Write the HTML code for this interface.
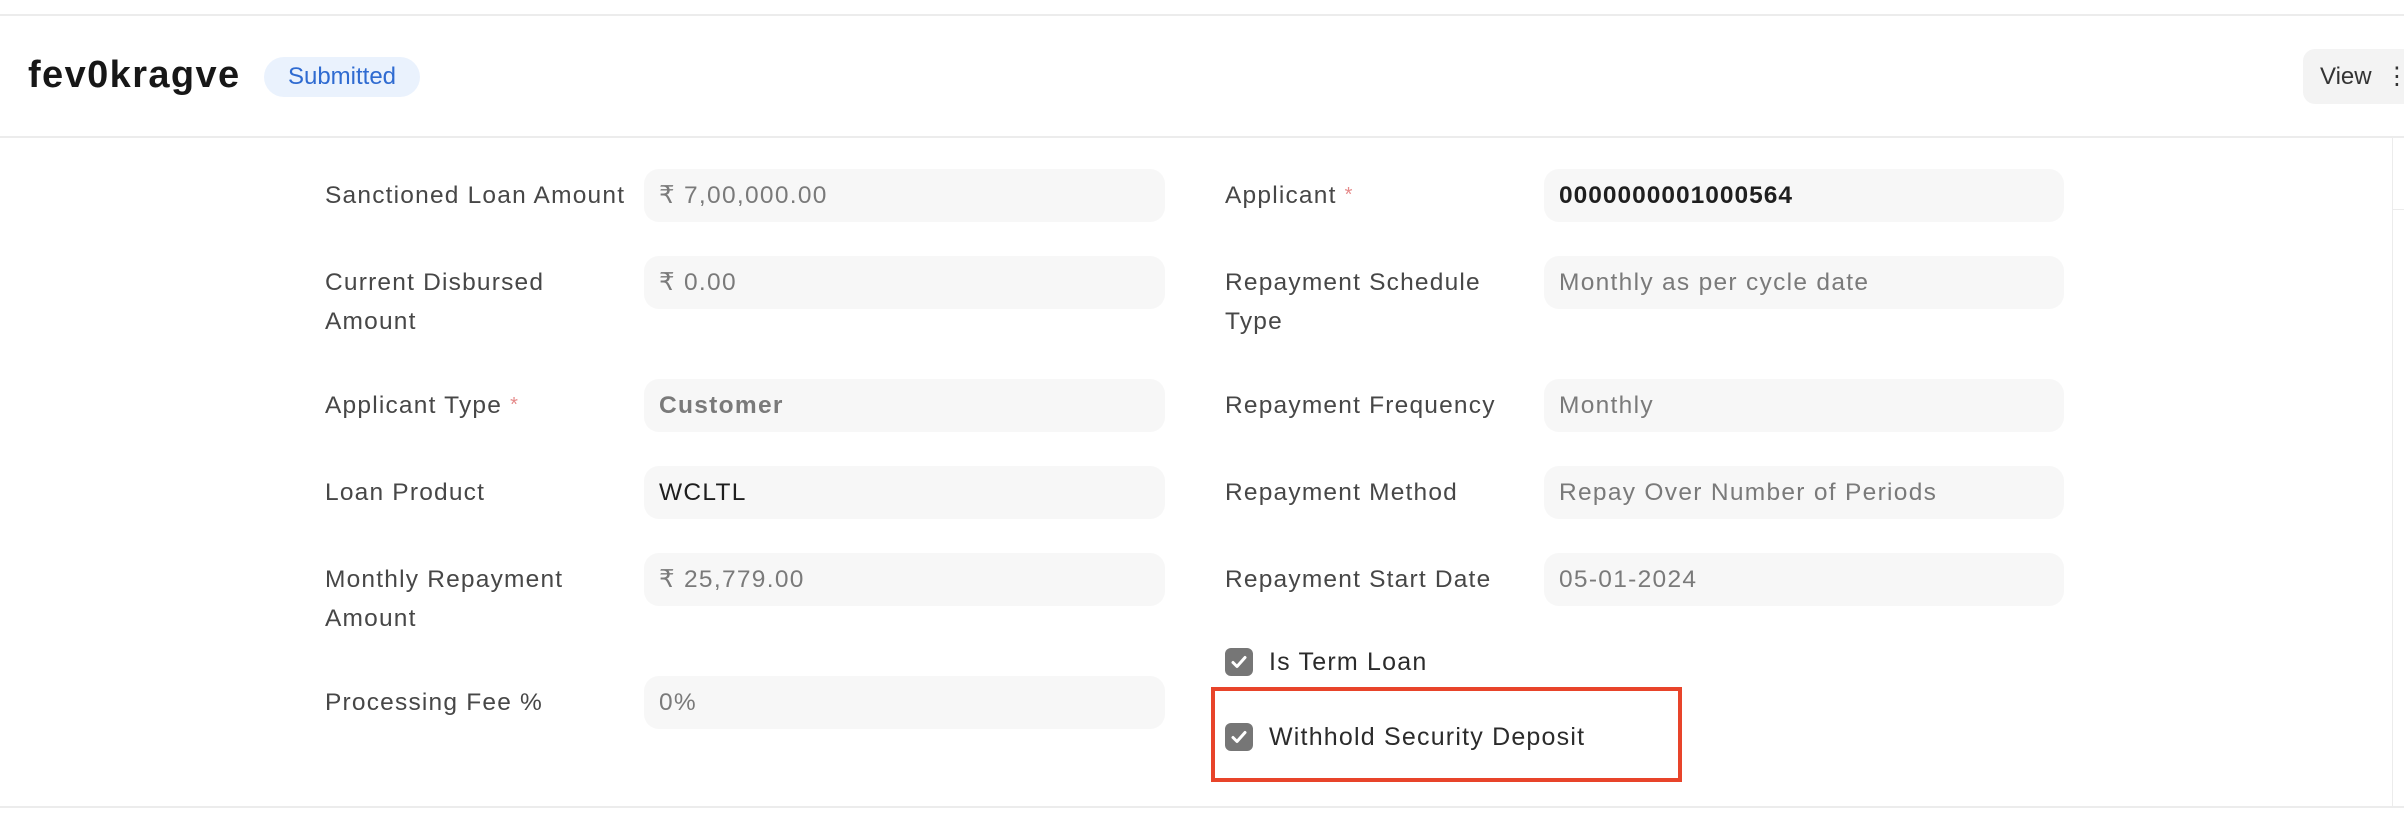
<!DOCTYPE html>
<html><head><style>
body{margin:0;width:2404px;height:828px;background:#fff;font-family:"Liberation Sans",sans-serif;position:relative;overflow:hidden}
.a{position:absolute}
.l{position:absolute;font-size:24.5px;letter-spacing:1.2px;color:#474747;line-height:39px}
.i{position:absolute;background:#f7f7f7;border-radius:15px;height:53px;font-size:24.5px;letter-spacing:1.3px;color:#7a7a7a;line-height:53px;padding-left:15px;box-sizing:border-box;white-space:nowrap}
.s{color:#e58a8a;font-size:20px;vertical-align:top}
.cb{position:absolute;width:28px;height:28px;border-radius:6px;background:#767676}
.ct{position:absolute;font-size:25px;letter-spacing:1.2px;color:#2b2b2b;line-height:30px}
</style></head><body>
<div class="a" style="left:0;top:14px;width:2404px;height:2px;background:#ececec"></div>
<div class="a" style="left:28px;top:54px;font-size:38px;letter-spacing:1.4px;font-weight:bold;color:#171717">fev0kragve</div>
<div class="a" style="left:264px;top:57px;width:156px;height:40px;border-radius:20px;background:#eaf2fd;color:#2f6bd1;font-size:24px;line-height:40px;text-align:center">Submitted</div>
<div class="a" style="left:2303px;top:49px;width:140px;height:55px;border-radius:12px;background:#f3f3f3;color:#333;font-size:24px;line-height:55px;padding-left:17px;box-sizing:border-box">View &nbsp;⋮</div>
<div class="a" style="left:0;top:136px;width:2404px;height:2px;background:#ececec"></div>
<div class="a" style="left:2392px;top:138px;width:1px;height:668px;background:#ececec"></div>
<div class="a" style="left:2392px;top:209px;width:12px;height:1px;background:#ececec"></div>

<div class="l" style="left:325px;top:176px">Sanctioned Loan Amount</div>
<div class="i" style="left:644px;top:169px;width:521px">₹ 7,00,000.00</div>
<div class="l" style="left:325px;top:263px">Current Disbursed<br>Amount</div>
<div class="i" style="left:644px;top:256px;width:521px">₹ 0.00</div>
<div class="l" style="left:325px;top:386px">Applicant Type <span class="s">*</span></div>
<div class="i" style="left:644px;top:379px;width:521px;font-weight:bold">Customer</div>
<div class="l" style="left:325px;top:473px">Loan Product</div>
<div class="i" style="left:644px;top:466px;width:521px;color:#1f1f1f">WCLTL</div>
<div class="l" style="left:325px;top:560px">Monthly Repayment<br>Amount</div>
<div class="i" style="left:644px;top:553px;width:521px">₹ 25,779.00</div>
<div class="l" style="left:325px;top:683px">Processing Fee %</div>
<div class="i" style="left:644px;top:676px;width:521px">0%</div>

<div class="l" style="left:1225px;top:176px">Applicant <span class="s">*</span></div>
<div class="i" style="left:1544px;top:169px;width:520px;color:#1f1f1f;font-weight:bold;letter-spacing:1px">0000000001000564</div>
<div class="l" style="left:1225px;top:263px">Repayment Schedule<br>Type</div>
<div class="i" style="left:1544px;top:256px;width:520px">Monthly as per cycle date</div>
<div class="l" style="left:1225px;top:386px">Repayment Frequency</div>
<div class="i" style="left:1544px;top:379px;width:520px">Monthly</div>
<div class="l" style="left:1225px;top:473px">Repayment Method</div>
<div class="i" style="left:1544px;top:466px;width:520px">Repay Over Number of Periods</div>
<div class="l" style="left:1225px;top:560px">Repayment Start Date</div>
<div class="i" style="left:1544px;top:553px;width:520px">05-01-2024</div>

<div class="cb" style="left:1225px;top:648px"><svg width="28" height="28"><path d="M8 14.5l4 4 8-9" stroke="#fff" stroke-width="3" fill="none" stroke-linecap="round" stroke-linejoin="round"/></svg></div>
<div class="ct" style="left:1269px;top:647px">Is Term Loan</div>
<div class="a" style="left:1211px;top:687px;width:471px;height:95px;border:4px solid #e8442a;box-sizing:border-box"></div>
<div class="cb" style="left:1225px;top:723px"><svg width="28" height="28"><path d="M8 14.5l4 4 8-9" stroke="#fff" stroke-width="3" fill="none" stroke-linecap="round" stroke-linejoin="round"/></svg></div>
<div class="ct" style="left:1269px;top:722px">Withhold Security Deposit</div>
<div class="a" style="left:0;top:806px;width:2404px;height:2px;background:#ececec"></div>
</body></html>
